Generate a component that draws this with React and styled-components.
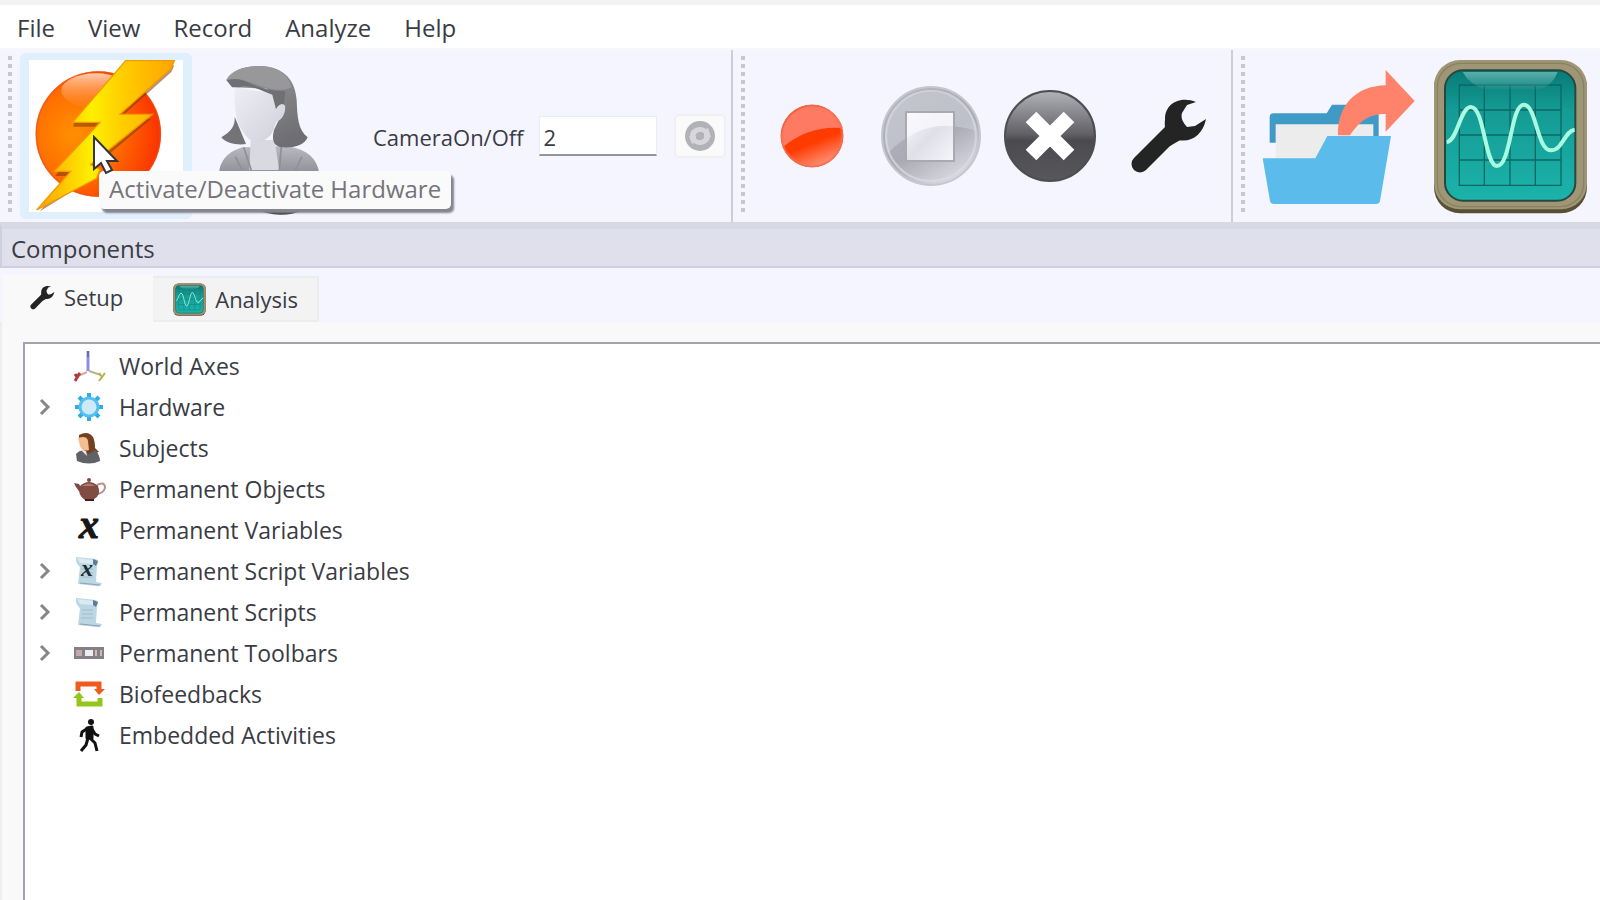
import React, { useState } from 'react'
import styled, { createGlobalStyle } from 'styled-components'

const GlobalStyle = createGlobalStyle`
  * { box-sizing: border-box; }
  body {
    margin: 0;
    background: #f9f9f9;
    color: #3a3b44;
    font-family: "Open Sans", "Noto Sans", sans-serif;
    font-size: 23px;
    line-height: 32px;
  }
  button, input { font: inherit; color: inherit; }
`

const Window = styled.div`
  display: flex;
  flex-direction: column;
  min-height: 100vh;
  overflow: hidden;
`

const MenuBar = styled.nav`
  display: flex;
  gap: 33px;
  padding: 7px 17px 4px;
  background: #fff;
  border-top: 5px solid #f2f2f2;
  border-bottom: 2px solid #f7f7f9;
`

const MenuItem = styled.button`
  padding: 0;
  border: 0;
  background: none;
  font-size: 24px;
`

const Toolbars = styled.div`
  display: flex;
  height: 172px;
  background: #f4f5ff;
`

const ToolGroup = styled.div`
  display: flex;
  align-items: center;
  flex: ${({ $grow }) => ($grow ? 1 : 'none')};
  padding-right: ${({ $end }) => $end || 0}px;
  border-right: ${({ $grow }) => ($grow ? 0 : 2)}px solid #cdced8;
`

const Handle = styled.span`
  width: 4px;
  height: 160px;
  margin: 0 8px;
  background: repeating-linear-gradient(#c6c7d2 0 4px, transparent 4px 8px);
`

const ToolButton = styled.button`
  display: flex;
  align-items: center;
  justify-content: center;
  width: ${({ $wide }) => ($wide ? 172 : 119)}px;
  height: 166px;
  padding: 0;
  border: 0;
  background: none;
`

const HotButton = styled(ToolButton)`
  background: #fff;
  border: 9px solid #e0effc;
  border-width: 7px 9px;
  border-radius: 6px;
`

const TipAnchor = styled.div`
  position: relative;
`

const Tooltip = styled.div`
  position: absolute;
  z-index: 1;
  left: 79px;
  top: 118px;
  padding: 2px 10px 4px;
  white-space: nowrap;
  font-size: 24px;
  color: #74747a;
  background: #fafafa;
  border-radius: 5px;
  box-shadow: 3px 4px 2px #85858f;
`

const Pointer = styled.svg`
  position: absolute;
  z-index: 2;
  left: 72px;
  top: 82px;
`

const CameraLabel = styled.label`
  margin-left: 9px;
  padding-top: 2px;
  font-size: 22px;
`

const CameraInput = styled.input`
  width: 118px;
  height: 40px;
  margin: 0 17px 0 15px;
  padding: 2px 4px 0;
  border: 1px solid #ececf0;
  border-bottom: 2px solid #94949c;
  background: #fff;
  font-size: 22px;
`

const RefreshButton = styled.button`
  display: flex;
  align-items: center;
  justify-content: center;
  width: 52px;
  height: 44px;
  padding: 0;
  border: 2px solid #efeff3;
  border-radius: 5px;
  background: #fafafa;
`

const DockTitle = styled.h1`
  margin: 0;
  padding: 4px 9px 1px;
  border: 2px solid #ced0de;
  border-top: 7px solid #d6d8e4;
  border-right: 0;
  font-size: 24px;
  font-weight: 400;
  background: #dfe0eb;
`

const TabStrip = styled.div`
  display: flex;
  align-items: flex-end;
  padding: 6px 2px 0;
  background: #f4f5ff;
`

const Tab = styled.button`
  display: flex;
  align-items: center;
  gap: 9px;
  height: ${({ $active }) => ($active ? 48 : 46)}px;
  padding: ${({ $active }) => ($active ? '0 28px 2px' : '0 19px 0 20px')};
  border: 2px solid ${({ $active }) => ($active ? '#f9f9f9' : '#ededf0')};
  border-left-width: 0;
  background: ${({ $active }) => ($active ? '#f9f9f9' : '#f3f3f3')};
  font-size: 22px;
`

const Pane = styled.div`
  display: flex;
  flex: 1;
  padding: 20px 0 0 21px;
  border-left: 2px solid #eeeeee;
  background: #f9f9f9;
`

const Tree = styled.ul`
  flex: 1;
  margin: 0;
  padding: 1px 0;
  list-style: none;
  background: #fff;
  border: solid #a2a2aa;
  border-width: 2px 0 0 2px;
`

const Row = styled.li`
  display: grid;
  grid-template-columns: 40px 48px 1fr;
  column-gap: 0;
  align-items: center;
  height: 41px;
`

const RowLabel = styled.span`
  padding-left: 6px;
`

const Expander = styled.button`
  display: flex;
  justify-content: center;
  padding: 0;
  border: 0;
  background: none;
`

const RowIcon = styled.svg`
  grid-column: 2;
  justify-self: center;
  margin-right: 1px;
`

const HardwareIcon = () => (
  <svg width="153" height="153" viewBox="90 180 459 459" aria-hidden="true">
    <defs>
      <radialGradient id="orb" cx=".3" cy=".5" r=".75">
        <stop offset="0" stopColor="#ff9000" />
        <stop offset=".5" stopColor="#ff6a00" />
        <stop offset="1" stopColor="#f92a00" />
      </radialGradient>
      <linearGradient id="gloss" x2="0" y2="1">
        <stop offset="0" stopColor="#ffd9c0" stopOpacity=".9" />
        <stop offset="1" stopColor="#ff8a30" stopOpacity=".2" />
      </linearGradient>
      <linearGradient id="bolt" x1="0" x2="1">
        <stop offset="0" stopColor="#ff9f00" />
        <stop offset=".4" stopColor="#fdf000" />
        <stop offset=".6" stopColor="#ffd000" />
        <stop offset="1" stopColor="#ffa400" />
      </linearGradient>
    </defs>
    <circle cx="295" cy="402" r="188" fill="url(#orb)" />
    <circle cx="295" cy="402" r="186" fill="none" stroke="#e8501a" strokeWidth="5" opacity=".6" />
    <ellipse cx="288" cy="272" rx="104" ry="52" fill="url(#gloss)" />
    <path d="M377 196L523 196L514 216L367 348L452 358L275 506L300 522L120 634L198 528L165 528L290 380H220L222 368Z" fill="#7c3a00" opacity=".55" />
    <path d="M377 182H523L513 206L360 343H457L272 494L300 508L290 535L110 630L212 514H163L300 367H218Z" fill="url(#bolt)" stroke="#f39a00" strokeWidth="4" />
  </svg>
)

const SubjectIcon = () => (
  <svg width="153" height="153" viewBox="600 180 459 459" overflow="visible" aria-hidden="true">
    <defs>
      <linearGradient id="hair" x2=".6" y2="1">
        <stop offset="0" stopColor="#9d9da0" />
        <stop offset="1" stopColor="#6f6f73" />
      </linearGradient>
      <linearGradient id="face" x2="1" y2="1">
        <stop offset="0" stopColor="#eeeef6" />
        <stop offset="1" stopColor="#cfcfda" />
      </linearGradient>
      <linearGradient id="coat" x2="0" y2="1">
        <stop offset="0" stopColor="#b9b9c1" />
        <stop offset=".5" stopColor="#85858c" />
        <stop offset="1" stopColor="#3b3b40" />
      </linearGradient>
    </defs>
    <path d="M652 510C660 470 690 452 720 442L850 438C910 446 940 470 950 510L944 590Q910 644 836 644Q770 644 720 600L660 580Z" fill="url(#coat)" />
    <path d="M742 510L746 420H818L832 510Z" fill="#d9d9e2" />
    <path d="M725 442L748 510M838 440L832 510M700 470L720 510M900 470L880 510" stroke="#8f8f98" strokeWidth="5" fill="none" />
    <path d="M673 240C690 210 730 198 775 198C850 200 880 245 884 300C886 350 888 390 917 412C905 440 870 444 840 442C815 440 808 420 816 390L850 318L815 320C810 290 800 270 795 266L700 262Z" fill="url(#hair)" />
    <path d="M698 350C700 380 685 395 658 412C672 432 712 436 732 432Z" fill="#737378" />
    <path d="M698 262C696 330 700 380 742 418Q772 440 806 405C816 390 818 376 824 364C842 362 854 330 848 316C838 308 828 312 824 328L812 280Z" fill="url(#face)" />
    <path d="M673 240C700 232 720 238 745 250C780 266 815 275 850 273L846 312Q830 310 822 328L811 284C780 274 740 250 712 262L690 262Z" fill="#707074" />
    <path d="M673 240C690 210 730 198 775 198C825 199 860 225 868 262C830 280 790 262 745 246C720 236 700 234 673 240Z" fill="#98989b" />
  </svg>
)

const RefreshIcon = () => (
  <svg width="32" height="32" viewBox="0 0 32 32" aria-hidden="true">
    <circle cx="16" cy="16" r="15" fill="#b1b1b8" />
    <path d="M6 17A10 9 0 0 1 22 9L24 8L27 17H19L20 13A6 5 0 0 0 11 17Z" fill="#d6d6dc" />
    <path d="M26 16A10 9 0 0 1 10 23L8 24L5 16H13L12 19A6 5 0 0 0 21 16Z" fill="#d6d6dc" />
    <circle cx="16" cy="16" r="4" fill="#b1b1b8" />
  </svg>
)

const RecordIcon = () => (
  <svg width="66" height="66" viewBox="0 0 66 66" aria-hidden="true">
    <defs>
      <linearGradient id="rec" x1=".3" x2=".7" y2="1">
        <stop offset=".6" stopColor="#ff3b00" />
        <stop offset="1" stopColor="#ff9a84" />
      </linearGradient>
    </defs>
    <circle cx="33" cy="33" r="31" fill="url(#rec)" stroke="#e9694a" strokeWidth="1" />
    <path d="M4 44A31 31 0 1 1 64 25Q30 22 4 44Z" fill="#ff7a62" />
    <circle cx="33" cy="33" r="30" fill="none" stroke="#f56f55" strokeWidth="2" opacity=".6" />
  </svg>
)

const StopIcon = () => (
  <svg width="102" height="102" viewBox="0 0 102 102" aria-hidden="true">
    <defs>
      <linearGradient id="stop" x1=".2" x2=".8" y2="1">
        <stop offset="0" stopColor="#b6b7c0" />
        <stop offset=".55" stopColor="#a9aab4" />
        <stop offset="1" stopColor="#e0e1ea" />
      </linearGradient>
      <linearGradient id="square" x2="1" y2="1">
        <stop offset="0" stopColor="#fafaff" />
        <stop offset=".5" stopColor="#dfdfe8" />
        <stop offset="1" stopColor="#f6f6fc" />
      </linearGradient>
    </defs>
    <circle cx="51" cy="51" r="49" fill="url(#stop)" stroke="#c5c6d0" strokeWidth="2" />
    <path d="M8 68A46 46 0 1 1 97 46Q45 30 8 68Z" fill="#d2d3dd" opacity=".5" />
    <circle cx="51" cy="51" r="45" fill="none" stroke="#dcdde6" strokeWidth="2" opacity=".7" />
    <path d="M26 27H74V76H26Z" fill="url(#square)" stroke="#a9a9b0" strokeWidth="2" />
    <path d="M27 53Q46 39 73 41V28H27Z" fill="#f7f7fc" opacity=".8" />
  </svg>
)

const CancelIcon = () => (
  <svg width="94" height="94" viewBox="0 0 94 94" aria-hidden="true">
    <defs>
      <linearGradient id="cancel" x2="0" y2="1">
        <stop offset="0" stopColor="#b2b2b9" />
        <stop offset=".48" stopColor="#606065" />
        <stop offset=".55" stopColor="#4b4b4f" />
        <stop offset="1" stopColor="#58585c" />
      </linearGradient>
    </defs>
    <circle cx="47" cy="47" r="45" fill="url(#cancel)" stroke="#4d4d52" strokeWidth="2" />
    <path d="M28 28L66 66M66 28L28 66" stroke="#fff" strokeWidth="15" />
  </svg>
)

const WrenchIcon = ({ size = 78 }) => (
  <svg width={size} height={size} viewBox="0 0 78 78" aria-hidden="true">
    <path d="M10 67L46 31" stroke="#242424" strokeWidth="17" strokeLinecap="round" />
    <path d="M66 5C52-1 35 5 35 22C34 34 36 41 48 43C62 46 73 37 76 22L65 29L57 30Q50 23 52 16L57 8Z" fill="#242424" />
    <path d="M33 36L51 28L52 42L40 49Z" fill="#242424" />
  </svg>
)

const FolderIcon = () => (
  <svg width="153" height="153" viewBox="176 62 459 459" aria-hidden="true">
    <path d="M199 370V232Q199 222 210 222H370L386 196H510Q526 198 526 214V310H199Z" fill="#3f9bc5" />
    <path d="M217 255H510V360H217Z" fill="#ececec" />
    <path d="M404 288C402 200 455 140 547 138V92L634 185L547 277V224C490 224 465 252 440 288Z" fill="#ff826b" />
    <path d="M178 357H336L372 290H563L530 485Q528 494 518 494H212Q202 494 200 485Z" fill="#5bbcec" />
  </svg>
)

const ScopeIcon = ({ size = 155 }) => (
  <svg width={size} height={size} viewBox="691 59 465 465" aria-hidden="true">
    <defs>
      <linearGradient id="screen" x2="0" y2="1">
        <stop offset="0" stopColor="#087a76" />
        <stop offset=".3" stopColor="#149b94" />
        <stop offset="1" stopColor="#1bb3ab" />
      </linearGradient>
      <linearGradient id="shine" x2="0" y2="1">
        <stop offset="0" stopColor="#9ed8d2" stopOpacity=".55" />
        <stop offset="1" stopColor="#9ed8d2" stopOpacity=".05" />
      </linearGradient>
    </defs>
    <rect x="694" y="66" width="459" height="456" rx="78" fill="#575036" />
    <rect x="694" y="62" width="459" height="448" rx="78" fill="#9f9675" />
    <rect x="704" y="72" width="439" height="430" rx="70" fill="none" stroke="#8a8161" strokeWidth="4" />
    <rect x="727" y="93" width="391" height="391" rx="54" fill="url(#screen)" stroke="#28483f" strokeWidth="6" />
    <path d="M770 137H1075V438H770ZM845 137V438M922 137V438M998 137V438M770 212H1075M770 287H1075M770 362H1075" fill="none" stroke="#0c6764" strokeWidth="4" />
    <path d="M780 98H1065Q1045 145 1005 150H845Q800 135 780 98Z" fill="url(#shine)" />
    <path d="M732 308C765 305 772 204 804 203C846 202 846 380 883 380C925 380 924 196 963 196C1002 196 1002 332 1044 333C1080 334 1085 275 1116 271" fill="none" stroke="#a8fbe0" strokeWidth="12" />
  </svg>
)

const Chevron = () => (
  <svg width="14" height="20" viewBox="0 0 14 20" aria-hidden="true">
    <path d="M3 3L10 10L3 17" fill="none" stroke="#85858a" strokeWidth="3" />
  </svg>
)

const Scroll = () => (
  <>
    <path d="M3 2L23 4Q27 7 24 10L23 27L29 28Q28 32 23 31L5 29L7 12Q2 8 3 2Z" fill="#bcd6e4" />
    <path d="M4 3L20 5L21 9L7 8Z" fill="#dcebf2" />
    <path d="M20 4L25 6L23 11L20 9Z" fill="#5f7d91" />
    <path d="M9 14H20M9 18H20M8 22H20" stroke="#9fbccd" />
    <path d="M7 28L27 30" stroke="#88a4b4" strokeWidth="1" />
  </>
)

const Letter = styled.text`
  font-family: "Liberation Serif", serif;
  font-style: italic;
  font-weight: 700;
  font-size: ${({ $size }) => $size}px;
  text-anchor: middle;
`

const rowIcons = {
  axes: (
    <g fill="none" strokeWidth="2">
      <path d="M15 1V21" stroke="#8e8ee6" strokeWidth="3" />
      <path d="M15 1V7" stroke="#6d6d9c" />
      <path d="M14 22L3 27" stroke="#dfa5a5" />
      <path d="M16 21L28 25" stroke="#b5b58a" />
      <path d="M2 24L4 27L7 23M5 26L2 31" stroke="#b23c3c" strokeWidth="3" />
      <path d="M26 23L29 27L32 23M29 27L26 31" stroke="#b4b44e" />
    </g>
  ),
  gear: (
    <g>
      <path d="M16 2V30M2 16H30M6 6L26 26M26 6L6 26" stroke="#2fabe5" strokeWidth="4" />
      <circle cx="16" cy="16" r="9" fill="#cdeafa" stroke="#54c1f1" strokeWidth="3" />
    </g>
  ),
  person: (
    <g>
      <path d="M6 3Q15-2 20 5Q22 9 22 16L26 20L15 23L10 17L6 6Z" fill="#75401f" />
      <path d="M5 6Q14 3 15 9L16 18Q9 20 7 14Z" fill="#f5be91" />
      <path d="M3 22Q7 17 11 19L16 22L22 18Q27 23 27 29Q16 34 4 29Z" fill="#606268" />
      <path d="M8 18L13 19L14 24Z" fill="#e9e9ee" />
    </g>
  ),
  teapot: (
    <g>
      <path d="M24 12Q32 8 32 15Q30 21 23 21" fill="none" stroke="#b78f8a" strokeWidth="2" />
      <path d="M1 10L6 11L11 20L8 21L3 14Z" fill="#794a42" />
      <path d="M7 13Q16 5 25 13Q29 22 20 27H12Q4 22 7 13Z" fill="#814c42" />
      <path d="M9 13Q16 8 22 13Z" fill="#b57b6f" />
      <path d="M12 26H21V28H12Z" fill="#41201b" />
      <circle cx="16" cy="7" r="2" fill="#814c42" />
    </g>
  ),
  variable: <Letter x="16" y="24" $size="40" fill="#161616" stroke="#161616">x</Letter>,
  scriptVariable: (
    <g>
      <Scroll />
      <Letter x="14" y="21" $size="24" fill="#1c2c35">x</Letter>
    </g>
  ),
  script: <Scroll />,
  toolbar: (
    <g>
      <path d="M1 10H31V22H1Z" fill="#858085" />
      <path d="M3 13H9V19H3Z" fill="#c2aaaa" />
      <path d="M12 13H20V19H12Z" fill="#eeeef0" />
      <path d="M22 13H24V19H22ZM27 13H29V19H27Z" fill="#d6b9b5" />
    </g>
  ),
  feedback: (
    <g fill="none" strokeWidth="5">
      <path d="M5 13V6H26V12" stroke="#ee5b1d" />
      <path d="M27 20V26H6V19" stroke="#93c51a" />
      <path d="M21 11H32L26 17Z" fill="#ee5b1d" />
      <path d="M0 20H11L6 14Z" fill="#93c51a" />
    </g>
  ),
  walk: (
    <g fill="none" stroke="#111" strokeWidth="3" strokeLinejoin="round">
      <circle cx="18" cy="3" r="3" fill="#111" stroke="none" />
      <path d="M14 9L19 8L19 19L14 19Z" fill="#111" />
      <path d="M15 9L9 13L8 18M19 10L22 15L26 17" />
      <path d="M17 19L22 24L24 32M15 19L13 26L8 32" />
    </g>
  ),
}

const rows = [
  { label: 'World Axes', icon: 'axes' },
  { label: 'Hardware', icon: 'gear', nested: true },
  { label: 'Subjects', icon: 'person' },
  { label: 'Permanent Objects', icon: 'teapot' },
  { label: 'Permanent Variables', icon: 'variable' },
  { label: 'Permanent Script Variables', icon: 'scriptVariable', nested: true },
  { label: 'Permanent Scripts', icon: 'script', nested: true },
  { label: 'Permanent Toolbars', icon: 'toolbar', nested: true },
  { label: 'Biofeedbacks', icon: 'feedback' },
  { label: 'Embedded Activities', icon: 'walk' },
]

const App = () => {
  const [camera, setCamera] = useState('2')

  return (
    <Window>
      <GlobalStyle />
      <MenuBar>
        {['File', 'View', 'Record', 'Analyze', 'Help'].map((name) => (
          <MenuItem key={name}>{name}</MenuItem>
        ))}
      </MenuBar>
      <Toolbars>
        <ToolGroup $end={5}>
          <Handle />
          <TipAnchor>
            <HotButton $wide aria-label="Activate/Deactivate Hardware"><HardwareIcon /></HotButton>
            <Pointer width="30" height="42" viewBox="0 0 30 42" aria-hidden="true">
              <path d="M2 2V34L9 28L14 38L20 35L15 26H25Z" fill="#fff" stroke="#33343c" strokeWidth="2" />
            </Pointer>
            <Tooltip role="tooltip">Activate/Deactivate Hardware</Tooltip>
          </TipAnchor>
          <ToolButton $wide aria-label="Subject"><SubjectIcon /></ToolButton>
          <CameraLabel htmlFor="camera">CameraOn/Off</CameraLabel>
          <CameraInput id="camera" value={camera} onChange={(e) => setCamera(e.target.value)} />
          <RefreshButton aria-label="Refresh"><RefreshIcon /></RefreshButton>
        </ToolGroup>
        <ToolGroup $end={2}>
          <Handle />
          <ToolButton aria-label="Record"><RecordIcon /></ToolButton>
          <ToolButton aria-label="Stop"><StopIcon /></ToolButton>
          <ToolButton aria-label="Cancel"><CancelIcon /></ToolButton>
          <ToolButton aria-label="Settings"><WrenchIcon /></ToolButton>
        </ToolGroup>
        <ToolGroup $grow>
          <Handle />
          <ToolButton $wide aria-label="Open"><FolderIcon /></ToolButton>
          <ToolButton $wide aria-label="Analyze"><ScopeIcon /></ToolButton>
        </ToolGroup>
      </Toolbars>
      <DockTitle>Components</DockTitle>
      <TabStrip role="tablist">
        <Tab role="tab" aria-selected="true" $active><WrenchIcon size={25} />Setup</Tab>
        <Tab role="tab" aria-selected="false"><ScopeIcon size={33} />Analysis</Tab>
      </TabStrip>
      <Pane>
        <Tree>
          {rows.map(({ label, icon, nested }) => (
            <Row key={label}>
              {nested && <Expander aria-label={`Expand ${label}`}><Chevron /></Expander>}
              <RowIcon width="34" height="34" viewBox="-1 -1 34 34" overflow="visible" aria-hidden="true">{rowIcons[icon]}</RowIcon>
              <RowLabel>{label}</RowLabel>
            </Row>
          ))}
        </Tree>
      </Pane>
    </Window>
  )
}

export default App
